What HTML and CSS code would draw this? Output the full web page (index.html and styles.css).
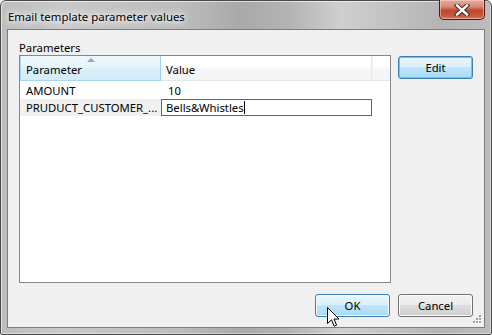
FILE: index.html
```html
<!DOCTYPE html>
<html>
<head>
<meta charset="utf-8">
<link rel="stylesheet" href="styles.css">
</head>
<body>
<div class="window">
  <div class="titlebar">
    <span class="title">Email template parameter values</span>
    <div class="close">
      <svg width="16" height="12" viewBox="0 0 16 12">
        <path d="M3 1.5 L13 10.5 M13 1.5 L3 10.5" stroke="#3a2a2a" stroke-width="4.4" stroke-linecap="square"/>
        <path d="M3 1.5 L13 10.5 M13 1.5 L3 10.5" stroke="#ffffff" stroke-width="2.4" stroke-linecap="square"/>
      </svg>
    </div>
  </div>
  <div class="client">
    <div class="main">
      <div class="left">
        <div class="label">Parameters</div>
        <div class="list">
          <div class="header">
            <div class="hcell col1 sorted"><span class="sort"></span>Parameter</div>
            <div class="hcell col2">Value</div>
            <div class="hcell col3"></div>
          </div>
          <div class="row">
            <div class="cell col1">AMOUNT</div>
            <div class="cell col2">10</div>
          </div>
          <div class="row selected">
            <div class="cell col1">PRUDUCT_CUSTOMER_...</div>
            <div class="cell col2"><div class="editbox">Bells&amp;Whistles<span class="caret"></span></div></div>
          </div>
        </div>
      </div>
      <div class="right">
        <button class="btn focused">Edit</button>
      </div>
    </div>
    <div class="footer">
      <button class="btn hover">OK</button>
      <button class="btn">Cancel</button>
    </div>
    <svg class="grip" width="10" height="10" viewBox="0 0 10 10">
      <g fill="#fff"><rect x="8" y="1" width="2" height="2"/><rect x="5" y="4" width="2" height="2"/><rect x="8" y="4" width="2" height="2"/><rect x="2" y="7" width="2" height="2"/><rect x="5" y="7" width="2" height="2"/><rect x="8" y="7" width="2" height="2"/></g>
      <g fill="#a0a0a0"><rect x="7" y="0" width="2" height="2"/><rect x="4" y="3" width="2" height="2"/><rect x="7" y="3" width="2" height="2"/><rect x="1" y="6" width="2" height="2"/><rect x="4" y="6" width="2" height="2"/><rect x="7" y="6" width="2" height="2"/></g>
    </svg>
  </div>
  <svg class="cursor" width="13" height="21" viewBox="0 0 13 21">
    <path d="M0.5 0.5 L0.5 16.5 L4.5 12.8 L7.2 19.2 L9.6 18.2 L7 12 L12 12 Z" fill="#fff" stroke="#000" stroke-width="1" stroke-linejoin="miter"/>
  </svg>
</div>
</body>
</html>
```

FILE: styles.css
```css
html, body {
  margin: 0;
  padding: 0;
  background: #ffffff;
}
body {
  width: 492px;
  height: 335px;
  overflow: hidden;
  font-family: "Noto Sans", "Open Sans", sans-serif;
  font-size: 11.3px;
  color: #000;
}
.window {
  position: relative;
  box-sizing: border-box;
  width: 492px;
  height: 335px;
  border: 1px solid #4a4a4a;
  border-radius: 6px 6px 2px 2px;
  padding: 0 6px 6px 6px;
  display: flex;
  flex-direction: column;
  background: linear-gradient(90deg, #bdbdbd 0px, #c9c9c9 60px, #bcbcbc 180px, #a9a9a9 240px, #b4b4b4 290px, #cfcfcf 340px, #c2c2c2 390px, #b4b4b4 440px, #bdbdbd 492px);
  box-shadow: inset 1px 1px 0 rgba(255,255,255,0.6), inset -1px -1px 0 rgba(255,255,255,0.4);
}
.titlebar {
  height: 28px;
  position: relative;
  display: flex;
  align-items: flex-start;
}
.title {
  margin-top: 8px;
  margin-left: 1px;
  font-size: 11.4px;
  line-height: 15px;
  color: #000;
  text-shadow: 0 0 8px #fff, 0 0 12px #fff, 0 0 4px #fff;
}
.close {
  position: absolute;
  right: 0px;
  top: -1px;
  width: 46px;
  height: 20px;
  box-sizing: border-box;
  border: 1px solid #4b1a12;
  border-top: none;
  border-radius: 0 0 5px 5px;
  background: linear-gradient(180deg, #e9a99b 0%, #d88a78 35%, #c0472f 55%, #c85a3e 85%, #d47a62 100%);
  box-shadow: inset 0 0 0 1px rgba(255,220,210,0.5);
  display: flex;
  align-items: center;
  justify-content: center;
}
.client {
  flex: 1;
  position: relative;
  box-sizing: border-box;
  border: 1px solid #7d7d7d;
  background: #f0f0f0;
  padding: 10px 11px 10px 11px;
  display: flex;
  flex-direction: column;
}
.main {
  display: flex;
  gap: 7px;
  flex: 1;
}
.left {
  width: 372px;
  display: flex;
  flex-direction: column;
}
.label {
  height: 15px;
  line-height: 16px;
}
.list {
  height: 228px;
  box-sizing: border-box;
  border: 1px solid #828790;
  background: #fff;
}
.header {
  display: flex;
  height: 25px;
  box-sizing: border-box;
  background: linear-gradient(180deg, #ffffff 0%, #ffffff 45%, #f6f7f9 50%, #f3f4f6 100%);
  border-bottom: 1px solid #e3e5e8;
}
.hcell {
  position: relative;
  box-sizing: border-box;
  line-height: 22px;
  padding-top: 3px;
  padding-left: 5px;
  border-right: 1px solid #e4e7ec;
}
.col1 { width: 141px; }
.col2 { width: 211px; }
.col3 { flex: 1; border-right: none; border-left: 1px solid #f4f5f7; }
.hcell.sorted {
  background: linear-gradient(180deg, #eef8fd 0%, #e6f4fb 45%, #d9eef9 50%, #d5ecf8 100%);
  border-left: 1px solid #a6d6f0;
  border-right: 1px solid #9ad2ef;
  border-bottom: 1px solid #a6d6f0;
  padding-left: 5px;
  height: 25px;
}
.sort {
  position: absolute;
  left: 66px;
  top: 2px;
  width: 0;
  height: 0;
  border-left: 4px solid transparent;
  border-right: 4px solid transparent;
  border-bottom: 4px solid #8fa7c4;
}
.row {
  display: flex;
  height: 17px;
  line-height: 17px;
}
.header + .row { margin-top: 1px; }
.row.selected .col1 { background: #f0f0f0; }
.cell {
  box-sizing: border-box;
  padding-left: 6px;
  white-space: nowrap;
  overflow: hidden;
}
.row .col2 { padding-left: 7px; }
.row.selected .col2 { padding-left: 0; width: 212px; overflow: visible; }
.editbox {
  box-sizing: border-box;
  height: 17px;
  width: 211px;
  border: 1px solid #646464;
  background: #fff;
  line-height: 15px;
  padding-left: 4px;
}
.caret {
  display: inline-block;
  width: 1px;
  height: 13px;
  background: #000;
  vertical-align: -2px;
}
.right {
  padding-top: 16px;
}
.footer {
  display: flex;
  justify-content: flex-end;
  gap: 8px;
  margin-top: 11px;
}
.btn {
  box-sizing: border-box;
  width: 75px;
  height: 23px;
  font-family: inherit;
  font-size: 11.3px;
  color: #000;
  border: 1px solid #707070;
  border-radius: 3px;
  background: linear-gradient(180deg, #f2f2f2 0%, #ebebeb 49%, #dddddd 50%, #cfcfcf 100%);
  box-shadow: inset 0 0 0 1px #fcfcfc;
  padding: 0;
  line-height: 19px;
}
.btn.focused {
  border-color: #3c7fb1;
  background: linear-gradient(180deg, #eaf6fd 0%, #d9f0fc 49%, #bee6fd 50%, #a7d9f5 100%);
  box-shadow: inset 0 0 0 1px #48d5fd;
}
.btn.hover {
  border-color: #3c7fb1;
  background: linear-gradient(180deg, #eaf6fd 0%, #d9f0fc 49%, #bee6fd 50%, #a7d9f5 100%);
  box-shadow: inset 0 0 0 1px #f8fcfe;
}
.grip {
  position: absolute;
  right: 2px;
  bottom: 2px;
}
.cursor {
  position: absolute;
  left: 326px;
  top: 306px;
}
```
